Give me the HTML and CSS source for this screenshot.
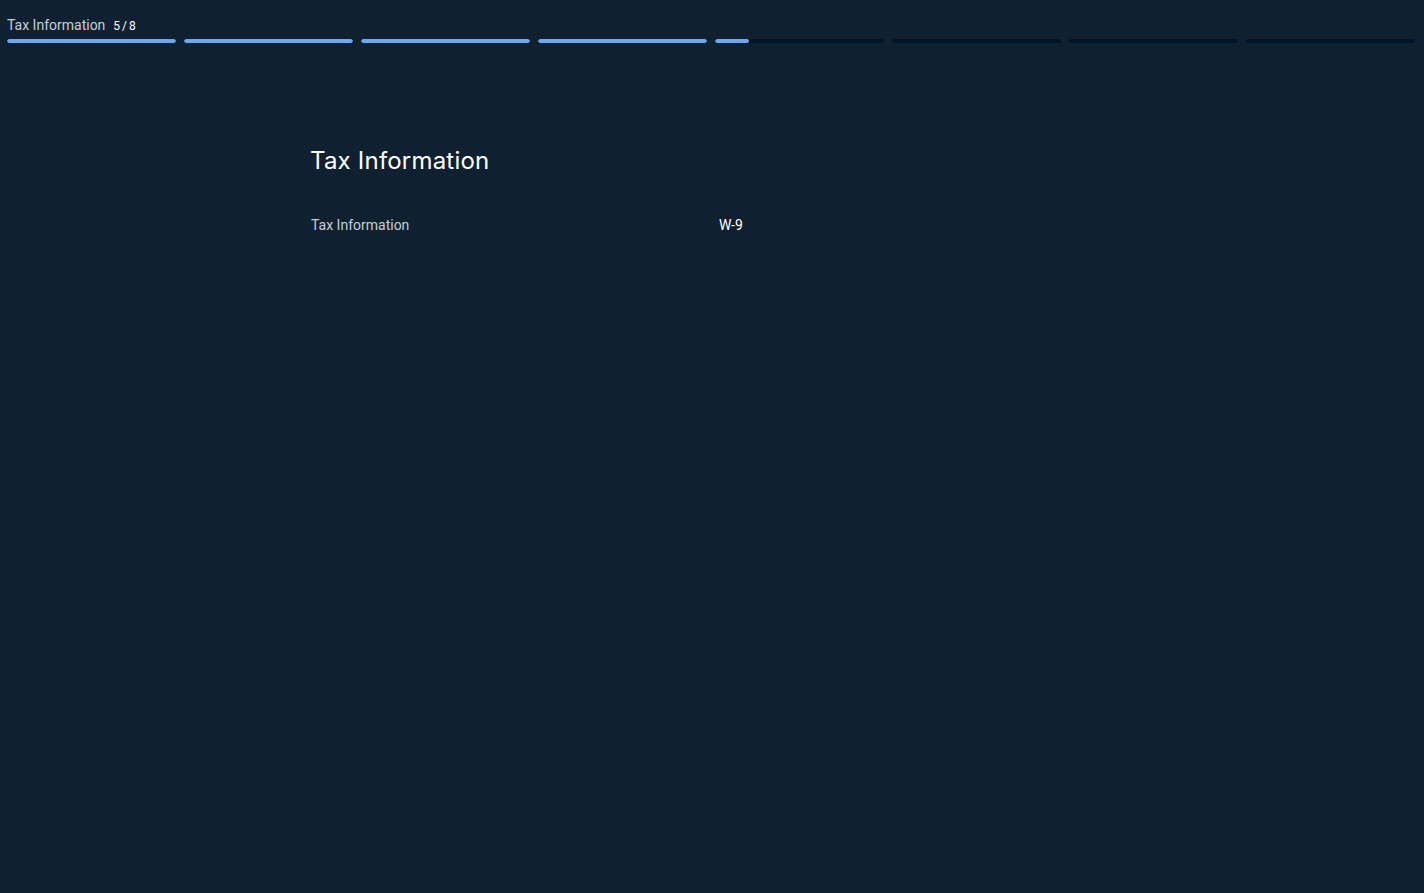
FILE: index.html
```html
<!DOCTYPE html>
<html lang="en">
<head>
  <meta charset="UTF-8">
  <meta name="viewport" content="width=device-width, initial-scale=1">
  <title>Tax Information</title>
  <link rel="stylesheet" href="styles.css">
</head>
<body>
  <header class="progress">
    <div class="progress-title">
      <span class="step-name">Tax Information</span>
      <span class="step-count">5 / 8</span>
    </div>
    <div class="progress-bars">
      <div class="bar"><div class="bar-fill" style="width: 100%"></div></div>
      <div class="bar"><div class="bar-fill" style="width: 100%"></div></div>
      <div class="bar"><div class="bar-fill" style="width: 100%"></div></div>
      <div class="bar"><div class="bar-fill" style="width: 100%"></div></div>
      <div class="bar"><div class="bar-fill" style="width: 20%"></div></div>
      <div class="bar"></div>
      <div class="bar"></div>
      <div class="bar"></div>
    </div>
  </header>

  <main class="content">
    <h1>Tax Information</h1>
    <div class="info-row">
      <span class="info-label">Tax Information</span>
      <span class="info-value">W-9</span>
    </div>
  </main>
</body>
</html>
```

FILE: styles.css
```css
html, body {
  margin: 0;
  padding: 0;
  height: 100%;
  background: #0f2130;
  font-family: Roboto, "Liberation Sans", sans-serif;
  color: #ffffff;
}

.progress {
  padding: 17px 9px 0 7px;
}

.progress-title {
  display: flex;
  align-items: baseline;
  gap: 8px;
  height: 18px;
}

.step-name {
  font-size: 14px;
  color: #c3cfdb;
}

.step-count {
  font-size: 12px;
  color: #ffffff;
  word-spacing: -1px;
}

.progress-bars {
  display: flex;
  gap: 8px;
  margin-top: 4px;
}

.bar {
  flex: 1;
  height: 4px;
  border-radius: 2px;
  background: #001529;
  overflow: hidden;
}

.bar-fill {
  height: 100%;
  border-radius: 2px;
  background: #6aa8f2;
}

.content {
  width: 802px;
  margin: 0 auto;
  padding-top: 102px;
}

h1 {
  margin: 0 0 0 -1px;
  font-family: Inter, "Noto Sans", sans-serif;
  font-size: 24px;
  font-weight: 400;
  line-height: 32px;
  letter-spacing: 0.2px;
  color: #ffffff;
}

.info-row {
  display: grid;
  grid-template-columns: 408px 1fr;
  margin-top: 38px;
  font-size: 14px;
  line-height: 20px;
}

.info-label {
  color: #c3cfdb;
}

.info-value {
  color: #ffffff;
}
```
